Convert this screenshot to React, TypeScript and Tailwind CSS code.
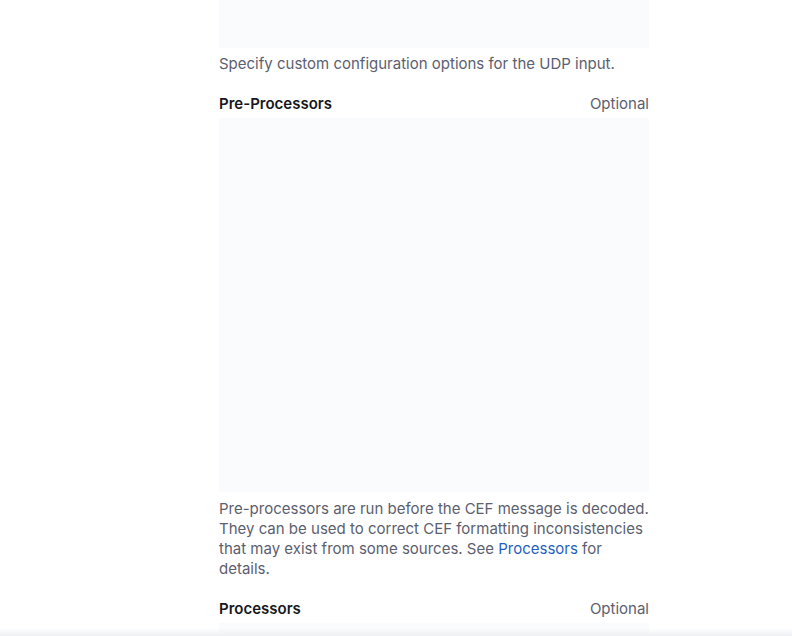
import React from "react";

interface FieldProps {
  title: string;
  boxHeight: string;
  children?: React.ReactNode;
}

const Field = ({ title, boxHeight, children }: FieldProps) => {
  return (
    <div className="flex flex-col">
      <div className="flex items-center justify-between h-5 text-[15px] leading-5">
        <span className="font-semibold text-[#16181d]">{title}</span>
        <span className="text-[#5c6070]">Optional</span>
      </div>
      <div className={`mt-1 bg-[#fafbfc] ${boxHeight}`} />
      {children && (
        <p className="mt-[7px] text-[15px] leading-5 text-[#5c6070]">{children}</p>
      )}
    </div>
  );
};

export default function App() {
  return (
    <div
      className="relative h-[636px] w-[792px] overflow-hidden bg-white"
      style={{ fontFamily: "Inter, 'Noto Sans', sans-serif" }}
    >
      <div className="ml-[219px] flex w-[430px] flex-col">
        <div className="h-[48px] bg-[#fafbfc]" />
        <p className="mt-[6px] text-[15px] leading-5 text-[#5c6070]">
          Specify custom configuration options for the UDP input.
        </p>
        <div className="mt-[20px]">
          <Field title="Pre-Processors" boxHeight="h-[374px]">
            Pre-processors are run before the CEF message is decoded. They can be used
            to correct CEF formatting inconsistencies that may exist from some sources.
            See <span className="text-[#1f5fbf]">Processors</span> for details.
          </Field>
        </div>
        <div className="mt-5">
          <Field title="Processors" boxHeight="h-[60px]" />
        </div>
      </div>
      <div className="absolute bottom-0 left-0 right-0 h-[8px] bg-gradient-to-b from-[#f4f5f7]/0 to-[#eef0f3]" />
    </div>
  );
}
